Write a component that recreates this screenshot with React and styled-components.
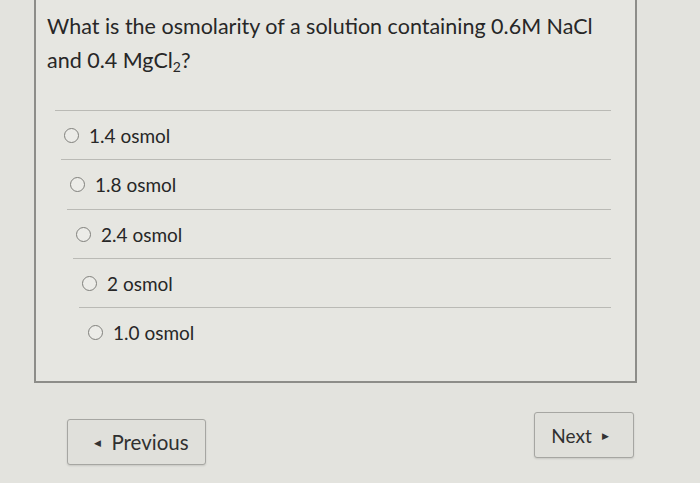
import React from "react";
import styled, { createGlobalStyle } from "styled-components";

const GlobalStyle = createGlobalStyle`
  html, body {
    margin: 0;
    padding: 0;
    background: #e3e3de;
    font-family: Lato, "Open Sans", sans-serif;
    color: #272727;
  }
`;

const Page = styled.div`
  width: 700px;
  height: 483px;
  overflow: hidden;
`;

const Panel = styled.div`
  margin: -2px 0 0 34px;
  width: 603px;
  border: 2px solid #8d8d89;
  background: #e6e6e1;
  padding: 9px 0 25px;
  box-sizing: border-box;
`;

const Question = styled.div`
  font-size: 21.5px;
  line-height: 34px;
  padding-left: 11px;
  margin-bottom: 33px;

  sub {
    font-size: 14px;
    vertical-align: -4px;
    line-height: 0;
  }
`;

const Options = styled.ul`
  list-style: none;
  margin: 0 24px 0 19px;
  padding: 0;
`;

const Option = styled.li`
  display: flex;
  align-items: center;
  gap: 10px;
  height: 49.3px;
  padding-top: 1px;
  border-top: 1.5px solid #babab5;
  box-sizing: border-box;
  margin-left: ${p => p.$indent}px;
  padding-left: 9px;
  font-size: 19px;
`;

const Radio = styled.span`
  width: 13px;
  height: 13px;
  border-radius: 50%;
  border: 1.5px solid #80807c;
  background: #ecece8;
`;

const Footer = styled.div`
  display: flex;
  justify-content: space-between;
  align-items: flex-start;
  padding: 29px 66px 0 67px;
`;

const NavButton = styled.button`
  font-family: Lato, "Open Sans", sans-serif;
  font-size: ${p => p.$size}px;
  color: #303030;
  background: #e0e0db;
  border: 1.5px solid #a6a6a2;
  border-radius: 3px;
  box-shadow: 0 1px 2px rgba(0, 0, 0, 0.12);
  height: 46px;
  width: ${p => p.$width}px;
  margin-top: ${p => p.$top}px;
  display: flex;
  align-items: center;
  justify-content: center;
  gap: 10px;
  padding: ${p => p.$pad};
`;

const Arrow = styled.span`
  font-size: 9px;
  color: #333;
`;

const options = ["1.4 osmol", "1.8 osmol", "2.4 osmol", "2 osmol", "1.0 osmol"];

export default function App() {
  return (
    <Page>
      <GlobalStyle />
      <Panel>
        <Question>
          What is the osmolarity of a solution containing 0.6M NaCl
          <br />
          and 0.4 MgCl<sub>2</sub>?
        </Question>
        <Options>
          {options.map((o, i) => (
            <Option key={o} $indent={i * 6}>
              <Radio />
              {o}
            </Option>
          ))}
        </Options>
      </Panel>
      <Footer>
        <NavButton $width={139} $top={7} $size={20.5} $pad="0 0 0 10px">
          <Arrow>◀</Arrow>Previous
        </NavButton>
        <NavButton $width={100} $top={0} $size={19} $pad="0 8px 0 0">
          Next<Arrow>▶</Arrow>
        </NavButton>
      </Footer>
    </Page>
  );
}
